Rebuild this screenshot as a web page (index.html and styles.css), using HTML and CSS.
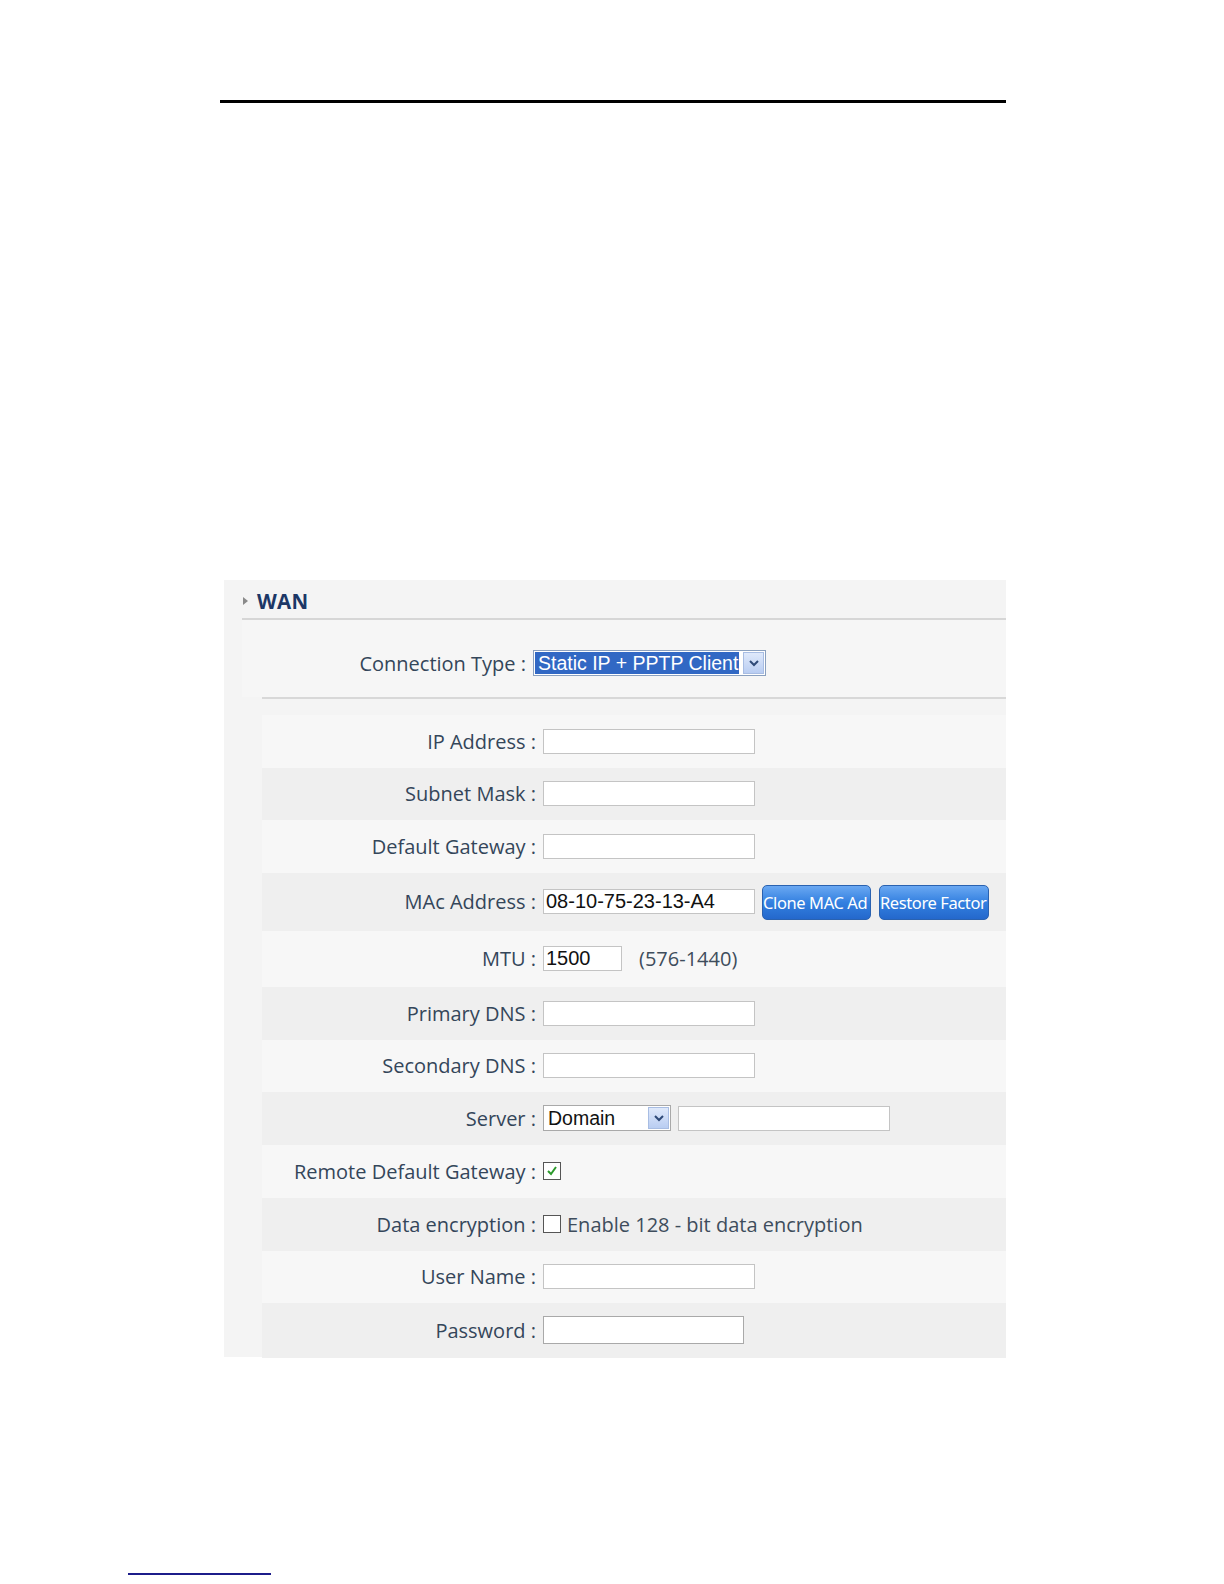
FILE: index.html
```html
<!DOCTYPE html>
<html>
<head>
<meta charset="utf-8">
<link rel="stylesheet" href="styles.css">
</head>
<body>
<div class="page">
  <div class="top-rule"></div>
  <div class="panel">
    <div class="panel-head">
      <span class="arrow"></span><span class="title">WAN</span>
    </div>
    <div class="conn-row">
      <span class="conn-label">Connection Type :</span>
      <div class="select conn-select">
        <span class="sel-text highlighted">Static IP + PPTP Client</span>
        <span class="sel-btn"><svg width="12" height="8" viewBox="0 0 12 8"><path d="M2 2 L6 6 L10 2" fill="none" stroke="#2f4a78" stroke-width="2"/></svg></span>
      </div>
    </div>
    <div class="divider"></div>
    <div class="rows">
      <div class="row light h52"><span class="label">IP Address :</span><span class="input"></span></div>
      <div class="row dark h52"><span class="label">Subnet Mask :</span><span class="input"></span></div>
      <div class="row light h52"><span class="label">Default Gateway :</span><span class="input"></span></div>
      <div class="row dark h57"><span class="label">MAc Address :</span><span class="input mono">08-10-75-23-13-A4</span><span class="btn b1">Clone MAC Ad</span><span class="btn b2">Restore Factor</span></div>
      <div class="row light h56"><span class="label">MTU :</span><span class="input mono short">1500</span><span class="hint">(576-1440)</span></div>
      <div class="row dark h52"><span class="label">Primary DNS :</span><span class="input"></span></div>
      <div class="row light h52"><span class="label">Secondary DNS :</span><span class="input"></span></div>
      <div class="row dark h52"><span class="label">Server :</span>
        <div class="select srv-select"><span class="sel-text">Domain</span><span class="sel-btn"><svg width="12" height="8" viewBox="0 0 12 8"><path d="M2 2 L6 6 L10 2" fill="none" stroke="#2f4a78" stroke-width="2"/></svg></span></div>
        <span class="input srv-input"></span>
      </div>
      <div class="row light h53"><span class="label">Remote Default Gateway :</span>
        <span class="check"><svg width="14" height="14" viewBox="0 0 14 14"><path d="M3 7 L6 10 L11 3" fill="none" stroke="#2c9a2c" stroke-width="2"/></svg></span>
      </div>
      <div class="row dark h52"><span class="label">Data encryption :</span><span class="check"></span><span class="hint enc">Enable 128 - bit data encryption</span></div>
      <div class="row light h52"><span class="label">User Name :</span><span class="input"></span></div>
      <div class="row dark h54"><span class="label">Password :</span><span class="input pwd"></span></div>
    </div>
  </div>
  <div class="bottom-rule"></div>
</div>
</body>
</html>
```

FILE: styles.css
```css
html, body {
  margin: 0;
  padding: 0;
  background: #ffffff;
  overflow: hidden;
}
.page {
  width: 1224px;
  height: 1584px;
  position: relative;
  overflow: hidden;
  padding-top: 100px;
  box-sizing: border-box;
}
.top-rule {
  margin-left: 220px;
  width: 786px;
  height: 3px;
  background: #000;
}
.panel {
  margin-top: 477px;
  margin-left: 224px;
  width: 782px;
  height: 777px;
  background: #f4f4f4;
  font-family: "Open Sans", "Noto Sans", sans-serif;
  color: #34465a;
}
.panel-head {
  margin-left: 18px;
  height: 40px;
  border-bottom: 2px solid #d6d6d6;
  display: flex;
  align-items: center;
  box-sizing: border-box;
  padding-top: 4px;
}
.arrow {
  width: 0;
  height: 0;
  border-top: 4px solid transparent;
  border-bottom: 4px solid transparent;
  border-left: 5px solid #8a8a8a;
  margin-left: 1px;
  margin-right: 9px;
}
.title {
  font-family: "Open Sans", sans-serif;
  font-weight: 700;
  font-size: 20.5px;
  color: #1c3766;
  letter-spacing: 0.3px;
}
.conn-row {
  margin-left: 18px;
  height: 77px;
  display: flex;
  align-items: center;
  background: #f6f6f6;
  box-sizing: border-box;
  padding-top: 9px;
}
.conn-label {
  width: 284px;
  text-align: right;
  font-size: 20px;
  margin-right: 7px;
  white-space: nowrap;
}
.select {
  display: flex;
  align-items: center;
  background: #fff;
  border: 1px solid #8aa0bf;
  height: 26px;
  box-sizing: border-box;
  padding: 1px;
}
.conn-select {
  width: 233px;
}
.sel-text {
  flex: 1;
  font-family: "Liberation Sans", Arial, sans-serif;
  font-size: 19.5px;
  line-height: 22px;
  color: #111;
  padding-left: 3px;
  white-space: nowrap;
  overflow: hidden;
}
.sel-text.highlighted {
  background: #3168c4;
  color: #fff;
  flex: 0 0 auto;
  margin-right: 3px;
  padding-right: 1px;
}
.sel-btn {
  width: 21px;
  height: 22px;
  background: linear-gradient(#dfe9fb, #b9cdf2);
  border: 1px solid #a8bde3;
  box-sizing: border-box;
  display: flex;
  align-items: center;
  justify-content: center;
  margin-left: auto;
  flex: 0 0 auto;
}
.divider {
  margin-left: 38px;
  height: 2px;
  background: #d8d8d8;
  margin-bottom: 16px;
}
.rows {
  margin-left: 38px;
}
.row {
  display: flex;
  align-items: center;
}
.row.light { background: #f7f7f7; }
.row.dark { background: #efefef; }
.h52 { height: 52.5px; }
.h53 { height: 53.5px; }
.h54 { height: 54.5px; }
.h56 { height: 56.5px; }
.h57 { height: 58px; }
.label {
  width: 274px;
  text-align: right;
  font-size: 20px;
  margin-right: 7px;
  white-space: nowrap;
}
.input {
  width: 212px;
  height: 25px;
  background: #fff;
  border: 1px solid #c4c4c4;
  box-sizing: border-box;
}
.input.mono {
  font-family: "Liberation Sans", Arial, sans-serif;
  font-size: 20px;
  line-height: 23px;
  color: #111;
  padding-left: 2px;
  white-space: nowrap;
}
.input.short {
  width: 79px;
}
.input.pwd {
  width: 201px;
  height: 28px;
  border: 1px solid #a9a9a9;
}
.hint {
  margin-left: 17px;
  font-size: 20px;
  color: #3e4d5c;
  white-space: nowrap;
}
.hint.enc {
  margin-left: 6px;
}
.btn {
  height: 35px;
  background: linear-gradient(#6aa8f2, #3380e0 50%, #2468cc);
  border: 1px solid #2a62b0;
  border-radius: 5px;
  box-sizing: border-box;
  color: #fff;
  font-family: "Noto Sans", sans-serif;
  font-size: 16.5px;
  line-height: 33px;
  white-space: nowrap;
  overflow: hidden;
  padding-left: 0;
  letter-spacing: -0.4px;
  margin-top: 1px;
}
.b1 { width: 109px; margin-left: 7px; }
.b2 { width: 110px; margin-left: 8px; }
.srv-select {
  width: 128px;
  border-color: #a9a9a9;
}
.srv-input {
  width: 212px;
  margin-left: 7px;
}
.check {
  width: 18px;
  height: 18px;
  background: #fff;
  border: 1px solid #555;
  box-sizing: border-box;
  display: flex;
  align-items: center;
  justify-content: center;
}
.bottom-rule {
  position: absolute;
  left: 128px;
  top: 1573px;
  width: 143px;
  height: 2px;
  background: #1c1c8a;
}
```
